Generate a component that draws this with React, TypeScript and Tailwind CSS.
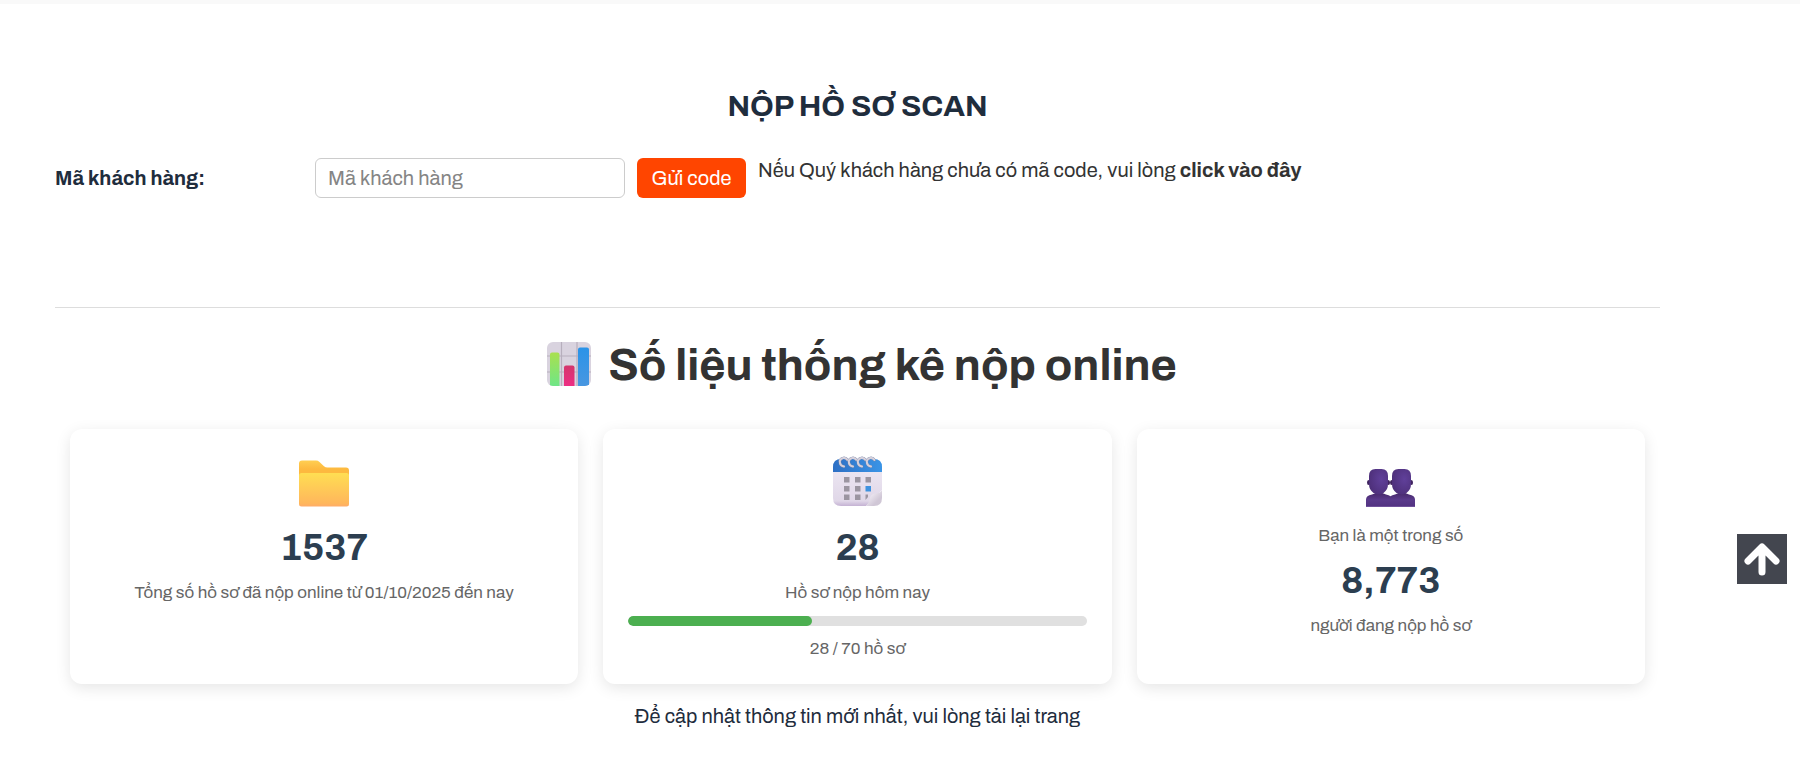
import type { ReactNode } from "react";

const TODAY_COUNT = 28;
const TODAY_LIMIT = 70;

function ChartIcon() {
  return (
    <svg viewBox="0 0 46 46" className="h-[46px] w-[46px] shrink-0" aria-hidden>
      <defs>
        <linearGradient id="chart-green" x1="0" y1="0" x2="0" y2="1">
          <stop offset="0" stopColor="#a9e04f" />
          <stop offset="1" stopColor="#6be68a" />
        </linearGradient>
        <linearGradient id="chart-pink" x1="0" y1="0" x2="0" y2="1">
          <stop offset="0" stopColor="#d3366c" />
          <stop offset="1" stopColor="#f02d86" />
        </linearGradient>
        <linearGradient id="chart-blue" x1="0" y1="0" x2="0" y2="1">
          <stop offset="0" stopColor="#2a93e8" />
          <stop offset="1" stopColor="#4a97e0" />
        </linearGradient>
        <clipPath id="chart-clip">
          <rect x="1" y="0" width="44" height="44" rx="6" />
        </clipPath>
      </defs>
      <g clipPath="url(#chart-clip)">
        <rect width="46" height="46" fill="#d9d3df" />
        <path d="M15.500 0v46M31 0v46M0 14h46M0 30h46" stroke="#b7afbd" strokeWidth="1.200" />
        <path d="M4 46V12.500a2 2 0 0 1 2-2h5.500a2 2 0 0 1 2 2V46z" fill="url(#chart-green)" />
        <path d="M18 46V25.500a2 2 0 0 1 2-2h6.500a2 2 0 0 1 2 2V46z" fill="url(#chart-pink)" />
        <path d="M32 46V7.500a2 2 0 0 1 2-2h7a2 2 0 0 1 2 2V46z" fill="url(#chart-blue)" />
      </g>
    </svg>
  );
}

function FolderIcon() {
  return (
    <svg viewBox="0 0 54 54" className="h-[54px] w-[54px]" aria-hidden>
      <defs>
        <linearGradient id="folder-back" x1="0" y1="0" x2="0" y2="1">
          <stop offset="0" stopColor="#ffcf52" />
          <stop offset=".35" stopColor="#fdb93f" />
        </linearGradient>
        <linearGradient id="folder-front" x1="0" y1="0" x2="0" y2="1">
          <stop offset="0" stopColor="#ffde52" />
          <stop offset=".9" stopColor="#ffb75c" />
          <stop offset="1" stopColor="#ffac68" />
        </linearGradient>
      </defs>
      <path
        d="M2 8.500a3 3 0 0 1 3-3h14q2 0 3.500 1.400l4.500 4.300q1.500 1.300 3.500 1.300h18.500q3 0 3 3V30H2z"
        fill="url(#folder-back)"
      />
      <path
        d="M2 20.500q0-2.500 2.500-2.500h45q2.500 0 2.500 2.500V49q0 2.500-2.500 2.500h-45Q2 51.500 2 49z"
        fill="url(#folder-front)"
      />
    </svg>
  );
}

function CalendarIcon() {
  return (
    <svg viewBox="0 0 54 54" className="h-[54px] w-[54px]" aria-hidden>
      <defs>
        <linearGradient id="cal-top" x1="0" y1="0" x2="1" y2="0">
          <stop offset="0" stopColor="#2d6fc4" />
          <stop offset="1" stopColor="#3a94e6" />
        </linearGradient>
        <linearGradient id="cal-body" x1="0" y1="0" x2="0" y2="1">
          <stop offset="0" stopColor="#ebe5f1" />
          <stop offset=".85" stopColor="#e0d7e8" />
          <stop offset="1" stopColor="#c4b2d3" />
        </linearGradient>
        <linearGradient id="cal-fold" x1="0" y1="0" x2="1" y2="1">
          <stop offset=".2" stopColor="#f3eff6" />
          <stop offset=".7" stopColor="#d0c7d6" />
        </linearGradient>
      </defs>
      <path d="M3 17h49v18L36 51H11q-8 0-8-8z" fill="url(#cal-body)" />
      <path d="M3 17v-5q0-8 8-8h33q8 0 8 8v5z" fill="url(#cal-top)" />
      <g fill="#9b95a1">
        <rect x="14" y="22" width="5.500" height="5.500" />
        <rect x="25" y="22" width="5.500" height="5.500" />
        <rect x="35.500" y="22" width="5.500" height="5.500" />
        <rect x="14" y="31" width="5.500" height="5.500" />
        <rect x="25" y="31" width="5.500" height="5.500" />
        <rect x="14" y="39.500" width="5.500" height="5.500" />
        <rect x="25" y="39.500" width="5.500" height="5.500" />
        <path d="M35.500 39.500h2.500v2.500l-2.500 3z" />
      </g>
      <rect x="35.500" y="31" width="5.500" height="5.500" fill="#3f92df" />
      <path d="M52 35q-1 2.500-6 3.500-5 0-6 4.500-1 5-4 8h8q8 0 8-8z" fill="url(#cal-fold)" />
      {[14, 23, 32, 41].map((x) => (
        <g key={x} transform={`translate(${x} 6)`} fill="none" strokeLinecap="round">
          <path d="M3.500-1A4.200 4.200 0 0 0-4.200 0Q-4.200 5 0 5.500" stroke="#7c88a8" strokeWidth="2.600" />
          <path d="M3.500-1A4.200 4.200 0 0 0-4.200 0Q-4.200 5 0 5.500" stroke="#d5d0dc" strokeWidth="2" />
        </g>
      ))}
    </svg>
  );
}

function PeopleIcon() {
  return (
    <svg viewBox="0 0 54 54" className="h-[54px] w-[54px]" aria-hidden>
      <defs>
        <radialGradient id="people-head" cx=".65" cy=".4" r=".7">
          <stop offset="0" stopColor="#60409a" />
          <stop offset="1" stopColor="#4d2f79" />
        </radialGradient>
        <linearGradient id="people-body" x1="0" y1="0" x2="0" y2="1">
          <stop offset="0" stopColor="#452768" />
          <stop offset=".5" stopColor="#5a3a8b" />
          <stop offset=".93" stopColor="#533382" />
          <stop offset="1" stopColor="#8a6db0" />
        </linearGradient>
      </defs>
      {[23, 0].map((x) => (
        <g key={x} transform={`translate(${x} 0)`}>
          <path d="M2 52v-7.500q0-4 6-5l5-2h4l5 2q6 1 6 5V52z" fill="url(#people-body)" />
          <ellipse cx="4.500" cy="27.500" rx="1.500" ry="2.500" fill="#40245f" />
          <ellipse cx="24.500" cy="27.500" rx="1.500" ry="2.500" fill="#40245f" />
          <path
            d="M5 21q0-7 6.500-7h6q6.500 0 6.500 7v8q0 5.500-4 8.500-5.500 4-11 0Q5 34.500 5 29z"
            fill="url(#people-head)"
          />
        </g>
      ))}
    </svg>
  );
}

function StatCard({ icon, children }: { icon: ReactNode; children: ReactNode }) {
  return (
    <div className="flex flex-col items-center rounded-xl bg-white px-[25px] pb-[23px] pt-[26px] text-center shadow-[0_4px_15px_rgba(0,0,0,0.1)]">
      {icon}
      {children}
    </div>
  );
}

function StatNumber({ children }: { children: ReactNode }) {
  return <p className="text-[37px] font-bold leading-[50px] text-[#2c3e50]">{children}</p>;
}

function StatLabel({ children }: { children: ReactNode }) {
  return <p className="text-[17px] leading-6 text-[#666]">{children}</p>;
}

export default function App() {
  return (
    <div className="min-h-screen border-t-4 border-[#f9f9f9] bg-white font-['Archivo','Liberation_Sans',sans-serif] text-[#1f2d3d]">
      <main className="pl-[55px] pr-[140px] pt-[81px]">
        {/* Submit form */}
        <form className="border-b border-[#ddd] pb-[109px]" onSubmit={(e) => e.preventDefault()}>
          <h2 className="text-center text-[30px] font-bold leading-[42px]">NỘP HỒ SƠ SCAN</h2>
          <div className="mt-[31px] flex items-start">
            <label htmlFor="customer-code" className="w-[260px] text-[20px] font-bold leading-10">
              Mã khách hàng:
            </label>
            <input
              id="customer-code"
              type="text"
              placeholder="Mã khách hàng"
              className="h-10 w-[310px] rounded-md border border-[#ccc] px-3 text-[20px] placeholder:text-[#858585]"
            />
            <button
              type="submit"
              className="ml-3 h-10 w-[109px] rounded-md bg-[#ff4500] text-[20px] text-white"
            >
              Gửi code
            </button>
            <p className="ml-3 text-[20px] leading-6 text-[#333]">
              Nếu Quý khách hàng chưa có mã code, vui lòng{" "}
              <a href="#" className="font-bold">
                click vào đây
              </a>
            </p>
          </div>
        </form>

        {/* Statistics */}
        <section className="px-[15px] pt-[27px]">
          <h1 className="flex items-center justify-center gap-4 pl-2 text-[45px] font-bold leading-[60px] text-[#333]">
            <ChartIcon />
            Số liệu thống kê nộp online
          </h1>

          <div className="mt-[34px] grid grid-cols-3 gap-[25px]">
            <StatCard icon={<FolderIcon />}>
              <div className="mt-[14px]">
                <StatNumber>1537</StatNumber>
              </div>
              <div className="mt-2">
                <StatLabel>Tổng số hồ sơ đã nộp online từ 01/10/2025 đến nay</StatLabel>
              </div>
            </StatCard>

            <StatCard icon={<CalendarIcon />}>
              <div className="mt-[14px]">
                <StatNumber>{TODAY_COUNT}</StatNumber>
              </div>
              <div className="mt-2">
                <StatLabel>Hồ sơ nộp hôm nay</StatLabel>
              </div>
              <div className="my-[11px] h-[10px] w-full overflow-hidden rounded-full bg-[#e0e0e0]">
                <div
                  className="h-full rounded-full bg-[#4caf50]"
                  style={{ width: `${(TODAY_COUNT / TODAY_LIMIT) * 100}%` }}
                />
              </div>
              <StatLabel>
                {TODAY_COUNT} / {TODAY_LIMIT} hồ sơ
              </StatLabel>
            </StatCard>

            <StatCard icon={<PeopleIcon />}>
              <div className="mt-[15px]">
                <StatLabel>Bạn là một trong số</StatLabel>
              </div>
              <div className="my-2">
                <StatNumber>8,773</StatNumber>
              </div>
              <StatLabel>người đang nộp hồ sơ</StatLabel>
            </StatCard>
          </div>

          <p className="mt-5 text-center text-[20px] leading-6">
            Để cập nhật thông tin mới nhất, vui lòng tải lại trang
          </p>
        </section>
      </main>

      <button
        type="button"
        aria-label="Lên đầu trang"
        className="fixed bottom-[200px] right-[13px] flex h-[50px] w-[50px] items-center justify-center bg-[#43464f]"
      >
        <svg viewBox="0 0 50 50" className="h-full w-full" aria-hidden>
          <path
            d="M11 27 25 13l14 14M25 15v23"
            fill="none"
            stroke="#fff"
            strokeWidth="7"
            strokeLinecap="round"
            strokeLinejoin="round"
          />
        </svg>
      </button>
    </div>
  );
}
